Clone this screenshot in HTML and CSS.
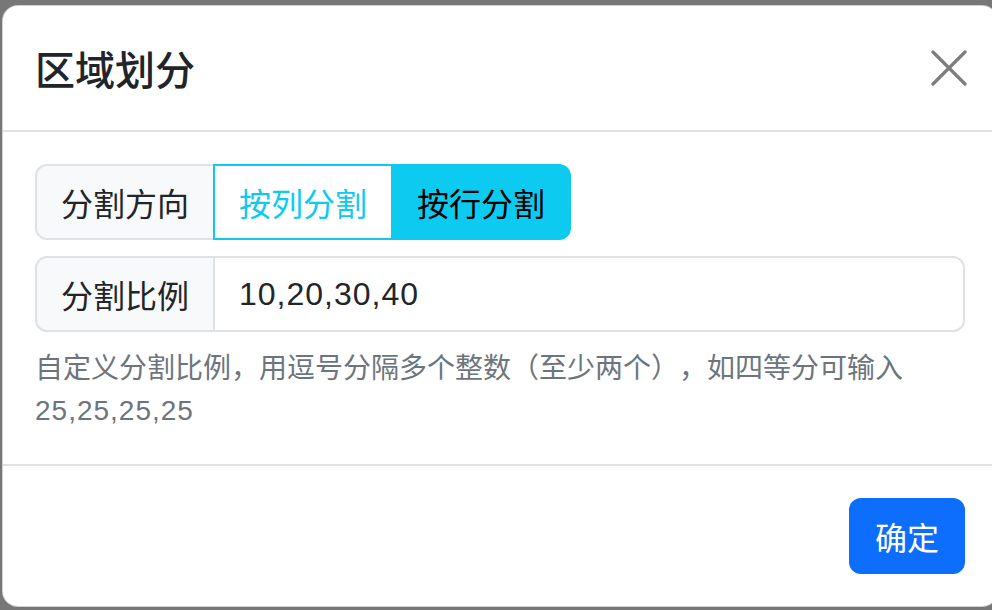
FILE: index.html
```html
<!DOCTYPE html>
<html lang="zh-CN">
<head>
<meta charset="utf-8">
<title>区域划分</title>
<link rel="stylesheet" href="styles.css">
</head>
<body>
<div class="modal">
  <div class="modal-header">
    <h5 class="modal-title">区域划分</h5>
    <button class="btn-close" type="button" aria-label="Close">
      <svg width="36" height="36" viewBox="0 0 36 36"><path d="M2 2 L34 34 M34 2 L2 34" stroke="#7d7d7d" stroke-width="3.2" stroke-linecap="round" fill="none"/></svg>
    </button>
  </div>
  <div class="modal-body">
    <div class="input-group mb">
      <span class="group-text">分割方向</span>
      <button class="btn btn-outline-info" type="button">按列分割</button>
      <button class="btn btn-info last" type="button">按行分割</button>
    </div>
    <div class="input-group full">
      <span class="group-text">分割比例</span>
      <input class="form-control" type="text" value="10,20,30,40">
    </div>
    <div class="form-text">自定义分割比例，用逗号分隔多个整数（至少两个），如四等分可输入<span class="num">25,25,25,25</span></div>
  </div>
  <div class="modal-footer">
    <button class="btn btn-primary" type="button">确定</button>
  </div>
</div>
</body>
</html>
```
FILE: styles.css
```css
* { box-sizing: border-box; }
html, body { height: 100%; }
body {
  margin: 0;
  padding: 5px 0 0 2px;
  background: #777777;
  overflow: hidden;
  font-family: "Liberation Sans", "Noto Sans CJK SC", sans-serif;
  color: #212529;
  text-spacing-trim: space-all;
}
.modal {
  width: 996px;
  background: #fff;
  border: 1px solid rgba(0,0,0,0.18);
  border-radius: 16px;
}
.modal-header {
  display: flex;
  align-items: center;
  padding: 32px;
  border-bottom: 2px solid #dee2e6;
}
.modal-title {
  margin: 0;
  font-size: 40px;
  font-weight: 500;
  line-height: 1.5;
  font-family: "Noto Sans CJK SC", sans-serif;
}
.btn-close {
  margin-left: auto;
  margin-right: -2px;
  padding: 0;
  border: 0;
  background: none;
  width: 36px;
  height: 36px;
  display: flex;
}
.modal-body {
  padding: 32px;
}
.input-group {
  display: inline-flex;
  align-items: stretch;
}
.input-group.full { display: flex; }
.mb { margin-bottom: 16px; }
.group-text {
  display: flex;
  align-items: center;
  padding: 12px 24px;
  font-size: 32px;
  line-height: 1.5;
  font-family: "Noto Sans CJK SC", sans-serif;
  background: #f8f9fa;
  border: 2px solid #dee2e6;
  border-radius: 12px 0 0 12px;
  color: #212529;
}
.btn {
  padding: 12px 24px;
  font-size: 32px;
  line-height: 1.5;
  font-family: "Noto Sans CJK SC", sans-serif;
  border: 2px solid transparent;
  border-radius: 0;
  margin: 0;
}
.btn-outline-info {
  background: #fff;
  border-color: #0dcaf0;
  color: #0dcaf0;
  margin-left: -2px;
}
.btn-info {
  background: #0dcaf0;
  border-color: #0dcaf0;
  color: #000;
  margin-left: -2px;
}
.btn-info.last { border-radius: 0 12px 12px 0; }
.form-control {
  flex: 1;
  min-width: 0;
  margin-left: -2px;
  padding: 12px 24px;
  font-size: 32px;
  line-height: 1.5;
  letter-spacing: 1px;
  font-family: "Liberation Sans", "Noto Sans CJK SC", sans-serif;
  color: #212529;
  border: 2px solid #dee2e6;
  border-radius: 0 12px 12px 0;
  outline: none;
}
.form-text {
  margin-top: 16px;
  font-size: 28px;
  line-height: 1.5;
  color: #6c757d;
  font-family: "Liberation Sans", "Noto Sans CJK SC", sans-serif;
}
.num { letter-spacing: 1px; }
.modal-footer {
  display: flex;
  justify-content: flex-end;
  padding: 24px;
  border-top: 2px solid #dee2e6;
}
.btn-primary {
  margin: 8px;
  background: #0d6efd;
  border-color: #0d6efd;
  color: #fff;
  border-radius: 12px;
}
```
